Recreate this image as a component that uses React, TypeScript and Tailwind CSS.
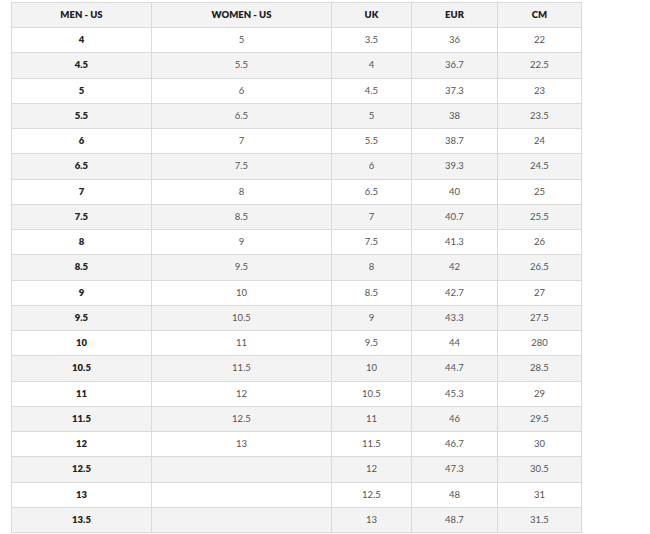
const headers = ['MEN - US', 'WOMEN - US', 'UK', 'EUR', 'CM'];

const rows: string[][] = [
  ['4', '5', '3.5', '36', '22'],
  ['4.5', '5.5', '4', '36.7', '22.5'],
  ['5', '6', '4.5', '37.3', '23'],
  ['5.5', '6.5', '5', '38', '23.5'],
  ['6', '7', '5.5', '38.7', '24'],
  ['6.5', '7.5', '6', '39.3', '24.5'],
  ['7', '8', '6.5', '40', '25'],
  ['7.5', '8.5', '7', '40.7', '25.5'],
  ['8', '9', '7.5', '41.3', '26'],
  ['8.5', '9.5', '8', '42', '26.5'],
  ['9', '10', '8.5', '42.7', '27'],
  ['9.5', '10.5', '9', '43.3', '27.5'],
  ['10', '11', '9.5', '44', '280'],
  ['10.5', '11.5', '10', '44.7', '28.5'],
  ['11', '12', '10.5', '45.3', '29'],
  ['11.5', '12.5', '11', '46', '29.5'],
  ['12', '13', '11.5', '46.7', '30'],
  ['12.5', '', '12', '47.3', '30.5'],
  ['13', '', '12.5', '48', '31'],
  ['13.5', '', '13', '48.7', '31.5'],
];

const widths = ['w-[140px]', 'w-[180px]', 'w-[80px]', 'w-[86px]', 'w-[84px]'];

export default function App() {
  return (
    <div className="w-[650px] h-[534px] overflow-hidden bg-white pt-[2px] pl-[11px] font-['Lato','Open_Sans',sans-serif]">
      <table className="w-[570px] table-fixed border-collapse text-[9.5px]">
        <thead>
          <tr className="bg-[#f3f3f3]">
            {headers.map((h, i) => (
              <th
                key={h}
                className={`${widths[i]} h-[25px] border border-[#dadada] text-center font-extrabold text-[#222]`}
              >
                {h}
              </th>
            ))}
          </tr>
        </thead>
        <tbody>
          {rows.map((r, ri) => (
            <tr key={ri} className={ri % 2 === 1 ? 'bg-[#f3f3f3]' : 'bg-white'}>
              {r.map((c, ci) => (
                <td
                  key={ci}
                  className={`h-[25.25px] border border-[#dadada] text-center p-0 ${
                    ci === 0 ? 'font-extrabold text-[#222]' : 'text-[#555]'
                  }`}
                >
                  {c}
                </td>
              ))}
            </tr>
          ))}
        </tbody>
      </table>
    </div>
  );
}
